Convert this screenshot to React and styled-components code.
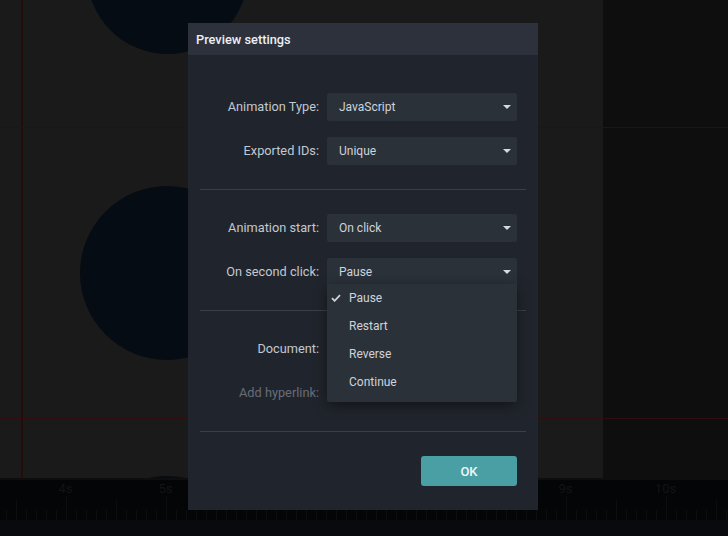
import React from 'react';
import styled, { createGlobalStyle } from 'styled-components';

const GlobalStyle = createGlobalStyle`
  html, body, #root {
    margin: 0;
    height: 100%;
  }
  body {
    background: #0e0e0e;
    font-family: Roboto, "Liberation Sans", sans-serif;
    overflow: hidden;
  }
`;

const Page = styled.div`
  position: relative;
  width: 728px;
  height: 536px;
  display: flex;
  flex-direction: column;
  overflow: hidden;
`;

const Stage = styled.div`
  position: relative;
  height: 480px;
  background: #0e0e0e;
  overflow: hidden;
`;

const Artboard = styled.div`
  position: relative;
  width: 603px;
  height: 478px;
  background: #1a1a1a;
  overflow: hidden;
`;

const Circle = styled.div`
  position: absolute;
  left: ${props => 167 - props.$r}px;
  top: ${props => props.$top}px;
  width: ${props => props.$r * 2}px;
  height: ${props => props.$r * 2}px;
  border-radius: 50%;
  background: #060c13;
`;

const GuideH = styled.div`
  position: absolute;
  left: 0;
  right: 0;
  top: ${props => props.$top}px;
  height: 1px;
  background: #300e0e;
`;

const GuideV = styled.div`
  position: absolute;
  left: 21px;
  top: 0;
  width: 2px;
  height: 478px;
  background: #240c0c;
`;

const Ruler = styled.div`
  position: relative;
  height: 40px;
  background: #040507;
`;

const RulerLabel = styled.span`
  position: absolute;
  top: 1px;
  transform: translateX(-50%);
  font-size: 13px;
  line-height: 15px;
  color: #121417;
`;

const Footer = styled.div`
  height: 16px;
  background: #080a0e;
`;

const Dialog = styled.div`
  position: absolute;
  left: 188px;
  top: 23px;
  width: 350px;
  height: 487px;
  background: #20252d;
  display: flex;
  flex-direction: column;
`;

const DialogHeader = styled.div`
  height: 32px;
  padding-left: 8px;
  display: flex;
  align-items: center;
  background: #2c313b;
  color: #eceff3;
  font-size: 12.8px;
  font-weight: 500;
`;

const DialogBody = styled.div`
  padding: 38px 12px 0;
  display: flex;
  flex-direction: column;
`;

const Section = styled.div`
  display: flex;
  flex-direction: column;
  gap: 16px;
`;

const Divider = styled.div`
  height: 1px;
  margin: 24px 0;
  background: #3a3f49;
`;

const Row = styled.div`
  display: grid;
  grid-template-columns: 119px 190px;
  column-gap: 8px;
  align-items: center;
  height: 28px;
`;

const Label = styled.div`
  padding-bottom: 2px;
  text-align: right;
  font-size: 12.75px;
  color: ${props => (props.$disabled ? '#686d76' : '#c3c8d1')};
`;

const SelectWrap = styled.div`
  position: relative;
`;

const SelectBox = styled.div`
  height: 28px;
  padding: 0 6px 0 12px;
  display: flex;
  align-items: center;
  justify-content: space-between;
  border-radius: 2px;
  background: #2b3139;
  color: #cfd3da;
  font-size: 12px;
`;

const Caret = styled.span`
  width: 0;
  height: 0;
  border-left: 4px solid transparent;
  border-right: 4px solid transparent;
  border-top: 4px solid #d5d9e0;
`;

const Menu = styled.div`
  position: absolute;
  left: 0;
  right: 0;
  top: 26px;
  padding-bottom: 6px;
  border-radius: 0 0 2px 2px;
  background: #2b3139;
  box-shadow: 0 4px 14px rgba(0, 0, 0, 0.45);
  z-index: 2;
`;

const MenuItem = styled.div`
  position: relative;
  height: 28px;
  padding-left: 22px;
  display: flex;
  align-items: center;
  color: #cfd3da;
  font-size: 12px;
`;

const Check = styled.svg`
  position: absolute;
  left: 4px;
  top: 10px;
`;

const Actions = styled.div`
  display: flex;
  justify-content: flex-end;
  padding-right: 9px;
`;

const OkButton = styled.button`
  width: 96px;
  height: 30px;
  border: none;
  border-radius: 3px;
  background: #4a9fa5;
  color: #eef7f7;
  font-family: inherit;
  font-size: 13px;
  font-weight: 500;
`;

const ticks = Array.from({ length: 73 }, (_, i) => 7 + i * 10);
const seconds = [4, 5, 6, 7, 8, 9, 10];

const tickTop = (x) => {
  if ((x - 67) % 100 === 0) return 16;
  if ((x - 17) % 100 === 0) return 20;
  return 30;
};

const Select = ({ value, children }) => (
  <SelectWrap>
    <SelectBox>
      {value}
      <Caret />
    </SelectBox>
    {children}
  </SelectWrap>
);

const App = () => (
  <Page>
    <GlobalStyle />
    <Stage>
      <Artboard>
        <Circle $r={80.5} $top={-107} />
        <Circle $r={87} $top={186} />
        <Circle $r={87} $top={476} />
        <GuideV />
      </Artboard>
      <GuideH $top={127} />
      <GuideH $top={418} />
    </Stage>
    <Ruler>
      {seconds.map((s) => (
        <RulerLabel key={s} style={{ left: 65.5 + (s - 4) * 100 }}>{s}s</RulerLabel>
      ))}
      <svg width="728" height="40" style={{ display: 'block' }}>
        {ticks.map((x) => (
          <rect key={x} x={x - 1} y={tickTop(x)} width="1" height={40 - tickTop(x)} fill="#0c0d0f" />
        ))}
      </svg>
    </Ruler>
    <Footer />
    <Dialog>
      <DialogHeader>Preview settings</DialogHeader>
      <DialogBody>
        <Section>
          <Row>
            <Label>Animation Type:</Label>
            <Select value="JavaScript" />
          </Row>
          <Row>
            <Label>Exported IDs:</Label>
            <Select value="Unique" />
          </Row>
        </Section>
        <Divider />
        <Section>
          <Row>
            <Label>Animation start:</Label>
            <Select value="On click" />
          </Row>
          <Row>
            <Label>On second click:</Label>
            <Select value="Pause">
              <Menu>
                <MenuItem>
                  <Check width="10" height="8" viewBox="0 0 10 8">
                    <path d="M1 4.2 L3.6 6.8 L9 1.2" fill="none" stroke="#cfd3da" strokeWidth="1.8" />
                  </Check>
                  Pause
                </MenuItem>
                <MenuItem>Restart</MenuItem>
                <MenuItem>Reverse</MenuItem>
                <MenuItem>Continue</MenuItem>
              </Menu>
            </Select>
          </Row>
        </Section>
        <Divider />
        <Section>
          <Row>
            <Label>Document:</Label>
          </Row>
          <Row>
            <Label $disabled>Add hyperlink:</Label>
          </Row>
        </Section>
        <Divider />
        <Actions>
          <OkButton>OK</OkButton>
        </Actions>
      </DialogBody>
    </Dialog>
  </Page>
);

export default App;
